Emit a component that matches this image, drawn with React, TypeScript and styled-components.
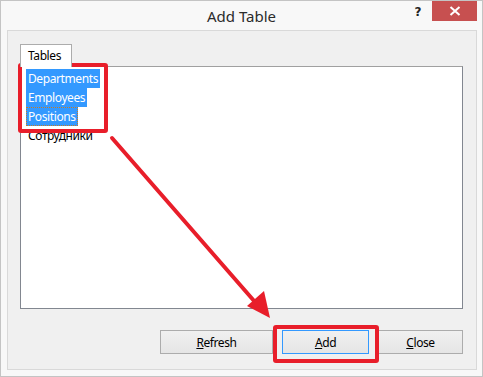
import React from 'react';
import styled, { createGlobalStyle } from 'styled-components';

const GlobalStyle = createGlobalStyle`
  html, body {
    margin: 0;
    padding: 0;
    background: #ffffff;
  }
  body {
    font-family: 'Segoe UI', 'Noto Sans', 'DejaVu Sans', sans-serif;
    font-size: 12px;
    letter-spacing: -0.4px;
    color: #000000;
  }
`;

const Window = styled.div`
  position: relative;
  width: 483px;
  height: 377px;
  box-sizing: border-box;
  border: 1px solid #c4c4c4;
  background: #f8f8f8;
  display: flex;
  flex-direction: column;
`;

const TitleBar = styled.div`
  height: 29px;
  display: grid;
  grid-template-columns: 1fr auto 1fr;
  align-items: start;
`;

const Title = styled.div`
  grid-column: 2;
  padding-top: 5px;
  font-size: 15px;
  color: #2b2b2b;
  letter-spacing: 0;
`;

const Controls = styled.div`
  grid-column: 3;
  justify-self: end;
  display: flex;
  align-items: flex-start;
  gap: 11px;
  margin-right: 5px;
`;

const HelpMark = styled.span`
  margin-top: 4px;
  font-family: 'DejaVu Sans', sans-serif;
  font-weight: bold;
  font-size: 12px;
  color: #222222;
`;

const CloseButton = styled.div`
  width: 45px;
  height: 20px;
  background: #c75050;
  display: flex;
  align-items: center;
  justify-content: center;
`;

const Client = styled.div`
  flex: 1;
  margin: 0 5px 6px 6px;
  border: 1px solid #d9d9d9;
  background: #f0f0f0;
  padding: 13px 13px 15px 12px;
  display: flex;
  flex-direction: column;
`;

const TabStrip = styled.div`
  display: flex;
  height: 22px;
`;

const Tab = styled.div`
  box-sizing: border-box;
  width: 52px;
  height: 23px;
  border: 1px solid #acacac;
  border-bottom: none;
  background: #ffffff;
  padding: 2px 0 0 7px;
  position: relative;
  z-index: 1;
`;

const ListBox = styled.div`
  box-sizing: border-box;
  height: 243px;
  border: 1px solid #828790;
  border-top-color: #a0a0a0;
  background: #ffffff;
  padding: 2px 5px;
`;

const Item = styled.div<{ $selected?: boolean; $focused?: boolean }>`
  box-sizing: border-box;
  width: fit-content;
  height: 19px;
  line-height: 19px;
  padding: 0 2px;
  background: ${(p) => (p.$selected ? '#3399ff' : 'transparent')};
  color: ${(p) => (p.$selected ? '#ffffff' : '#000000')};
  outline: ${(p) => (p.$focused ? '1px dotted #c47a2a' : 'none')};
  outline-offset: -1px;
  white-space: nowrap;
`;

const ButtonRow = styled.div`
  margin-top: 21px;
  display: flex;
  justify-content: flex-end;
  gap: 9px;
`;

const Button = styled.div<{ $width: number; $default?: boolean }>`
  box-sizing: border-box;
  width: ${(p) => p.$width}px;
  height: 24px;
  border: 1px solid ${(p) => (p.$default ? '#3399ff' : '#acacac')};
  background: linear-gradient(#f0f0f0, #e5e5e5);
  display: flex;
  align-items: center;
  justify-content: center;
  color: #000000;
`;

const Mnemonic = styled.span`
  text-decoration: underline;
`;

const Annotation = styled.div<{ $x: number; $y: number; $w: number; $h: number }>`
  position: absolute;
  left: ${(p) => p.$x}px;
  top: ${(p) => p.$y}px;
  width: ${(p) => p.$w}px;
  height: ${(p) => p.$h}px;
  box-sizing: border-box;
  border: 4px solid #e81e2a;
  border-radius: 3px;
  pointer-events: none;
`;

const ArrowLayer = styled.svg`
  position: absolute;
  left: -1px;
  top: -1px;
  pointer-events: none;
`;

const tables = [
  { name: 'Departments', selected: true },
  { name: 'Employees', selected: true },
  { name: 'Positions', selected: true, focused: true },
  { name: 'Сотрудники' },
];

const App: React.FC = () => {
  return (
    <>
      <GlobalStyle />
      <Window>
        <TitleBar>
          <Title>Add Table</Title>
          <Controls>
            <HelpMark>?</HelpMark>
            <CloseButton>
              <svg width="12" height="10" viewBox="0 0 12 10">
                <path d="M1.5 1 L10.5 9 M10.5 1 L1.5 9" stroke="#ffffff" strokeWidth="2" />
              </svg>
            </CloseButton>
          </Controls>
        </TitleBar>
        <Client>
          <TabStrip>
            <Tab>Tables</Tab>
          </TabStrip>
          <ListBox>
            {tables.map((t) => (
              <Item key={t.name} $selected={t.selected} $focused={t.focused}>
                {t.name}
              </Item>
            ))}
          </ListBox>
          <ButtonRow>
            <Button $width={113}>
              <span>
                <Mnemonic>R</Mnemonic>efresh
              </span>
            </Button>
            <Button $width={87} $default>
              <span>
                <Mnemonic>A</Mnemonic>dd
              </span>
            </Button>
            <Button $width={85}>
              <span>
                <Mnemonic>C</Mnemonic>lose
              </span>
            </Button>
          </ButtonRow>
        </Client>
        <Annotation $x={17} $y={62} $w={90} $h={70} />
        <Annotation $x={272} $y={324} $w={106} $h={38} />
        <ArrowLayer width="483" height="377" viewBox="0 0 483 377">
          <line x1="112" y1="138" x2="255" y2="302" stroke="#e81e2a" strokeWidth="4" strokeLinecap="round" />
          <polygon points="270,318 247,306 264,291" fill="#e81e2a" />
        </ArrowLayer>
      </Window>
    </>
  );
};

export default App;
